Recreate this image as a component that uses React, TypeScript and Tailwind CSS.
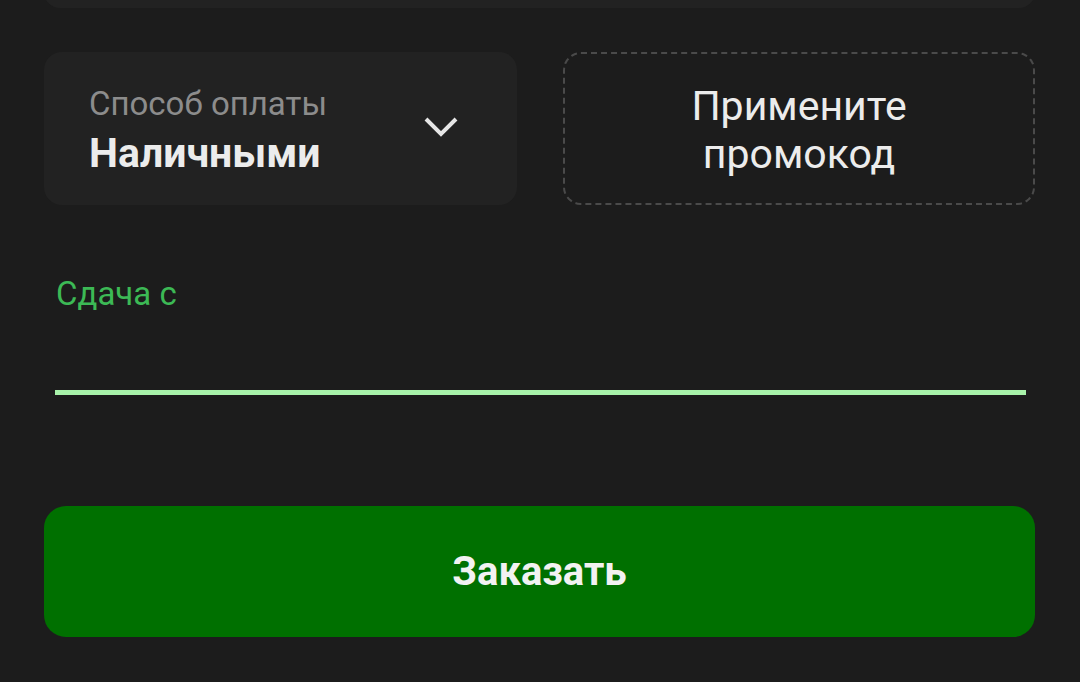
import React from "react";

export default function App() {
  return (
    <div
      className="w-[1080px] h-[682px] overflow-hidden bg-[#1c1c1c] px-[44px] flex flex-col"
      style={{ fontFamily: "Roboto, 'Noto Sans', sans-serif" }}
    >
      <div className="mt-[-100px] h-[108px] rounded-[16px] bg-[#222222] mr-[1px]" />

      <div className="mt-[44px] flex gap-[46px]">
        <div className="w-[473px] h-[153px] rounded-[18px] bg-[#222222] flex items-center pl-[45px] pr-[58px]">
          <div className="flex-1 flex flex-col pt-[4px]">
            <span className="text-[33px] leading-[40px] text-[#8c8c8c]">Способ оплаты</span>
            <span className="mt-[5px] text-[41px] leading-[48px] font-bold text-[#ececec]">Наличными</span>
          </div>
          <svg width="36" height="24" viewBox="0 0 36 24" className="mb-[4px]">
            <path d="M3 4 L18 19 L33 4" fill="none" stroke="#e6e6e6" strokeWidth="4" />
          </svg>
        </div>
        <div className="w-[472px] h-[153px] rounded-[18px] border-2 border-dashed border-[#4a4a4a] flex items-center justify-center">
          <span className="text-[41px] leading-[48px] text-[#ececec] text-center pt-[3px]">
            Примените
            <br />
            промокод
          </span>
        </div>
      </div>

      <div className="mt-[69px] pl-[11px] pr-[10px]">
        <div className="pl-[1px] text-[33px] leading-[40px] text-[#3cb955]">Сдача с</div>
        <div className="mt-[76px] h-[5px] bg-[#a8f2aa]" />
      </div>

      <button className="mt-[111px] h-[131px] rounded-[22px] bg-[#007000] flex items-center justify-center mr-[1px]">
        <span className="text-[40px] font-bold text-[#f2f2f2]">Заказать</span>
      </button>
    </div>
  );
}
